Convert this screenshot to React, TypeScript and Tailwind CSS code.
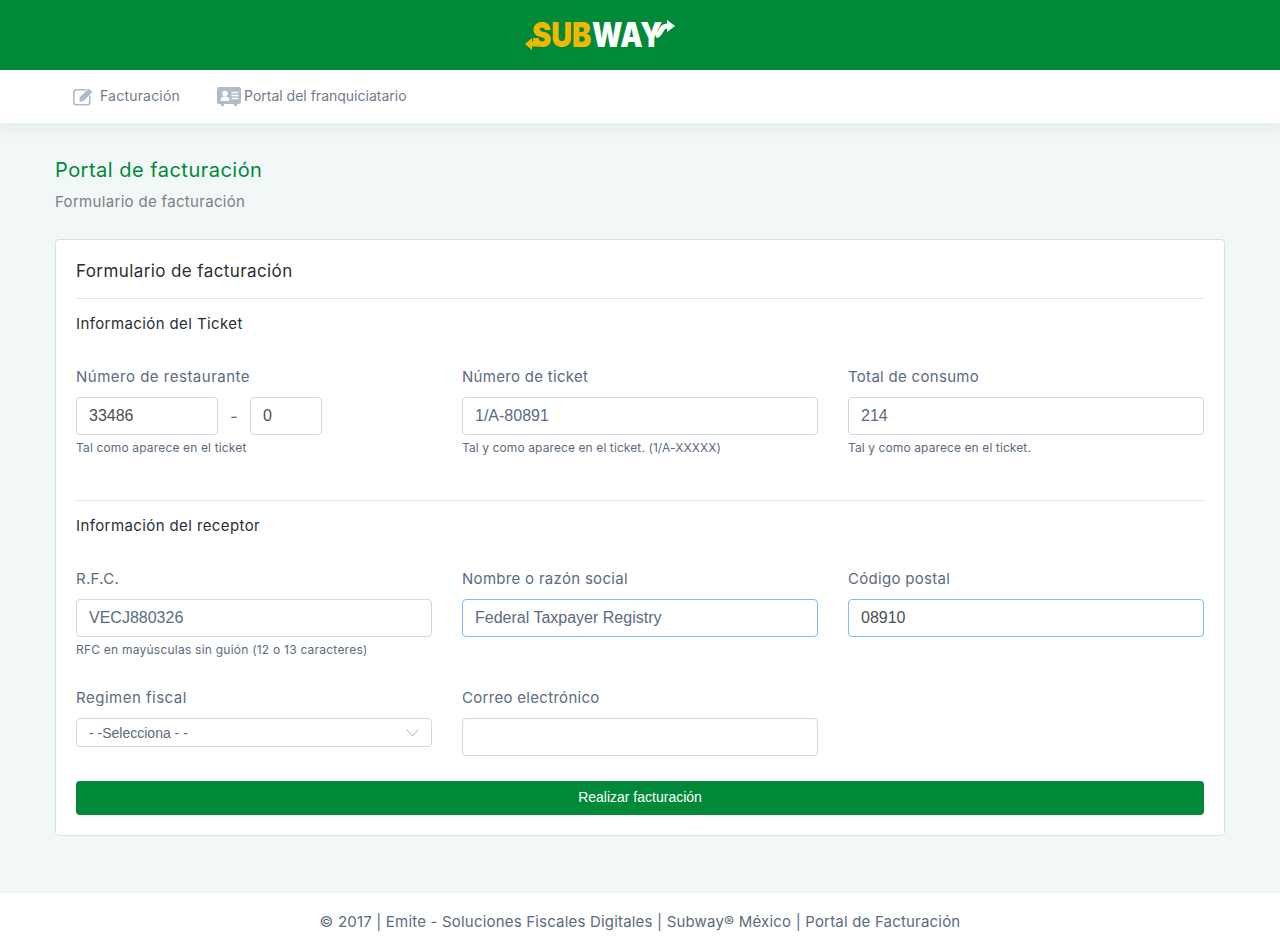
import React from "react";

const Box = ({ value, focus, dark, className = "" }: { value?: string; focus?: boolean; dark?: boolean; className?: string }) => (
  <div
    className={`flex h-[38px] items-center rounded-[4px] border bg-white px-3 font-['Liberation_Sans',sans-serif] text-[16px] ${focus ? "border-[#80bdff]" : "border-[#d5d8dc]"} ${dark ? "text-[#495057]" : "text-[#5b6b80]"} ${className}`}
  >
    {value}
  </div>
);

const Field = ({ label, value, help, focus, dark, helpClass = "tracking-[0.1px]" }: { label: string; value?: string; help?: string; focus?: boolean; dark?: boolean; helpClass?: string }) => (
  <div>
    <label className="block h-[22px] text-[15px] leading-[22px] tracking-[0.3px] text-[#5b6b80]">{label}</label>
    <div className="mt-[9px]">
      <Box value={value} focus={focus} dark={dark} />
    </div>
    {help && <p className={`mt-[4px] h-[18px] text-[12px] leading-[18px] text-[#5b6b80] ${helpClass}`}>{help}</p>}
  </div>
);

const Logo = () => (
  <div className="relative h-[30px] w-[150px]">
    <svg className="absolute left-0 top-[18px]" width="14" height="12" viewBox="0 0 14 12">
      <path d="M7 0 L0 6 L7 12 V8.5 H14 V3.5 H7 Z" fill="#f2b700" />
    </svg>
    <span className="absolute left-[7px] top-[-3px] origin-left scale-x-[0.85] font-['Inter',sans-serif] text-[34px] font-black leading-[36px] text-[#f2b700]">SUB</span>
    <span className="absolute left-[67px] top-[-3px] origin-left scale-x-[0.83] font-['Inter',sans-serif] text-[34px] font-black leading-[36px] text-white">WAY</span>
    <svg className="absolute left-[125px] top-0" width="25" height="20" viewBox="0 0 25 20">
      <path d="M6 16 C12 14 10 6 17 6" fill="none" stroke="#fff" strokeWidth="5" />
      <path d="M17 0 L25 6 L17 12 Z" fill="#fff" />
    </svg>
  </div>
);

export default function App() {
  return (
    <div className="flex min-h-[951px] flex-col bg-[#f2f7f7] font-['Inter',sans-serif]">
      <header className="flex h-[70px] items-center justify-center bg-[#008938] pr-[80px]">
        <Logo />
      </header>
      <nav className="flex h-[53px] items-center bg-white pb-[1px] pl-[73px] text-[14px] text-[#6f7c8c] shadow-[0_6px_20px_rgba(0,60,60,0.06)]">
        <div className="flex items-center gap-[6px] tracking-[0.2px]">
          <svg width="21" height="19" viewBox="0 0 21 19" fill="none">
            <rect x="0.8" y="2.8" width="16" height="15" rx="2.5" stroke="#afbcc7" strokeWidth="1.6" />
            <path d="M6 10.5 L15.5 1 L20 5 L10.5 14.5 L6 15.5 Z" fill="#afbcc7" stroke="#fff" strokeWidth="1" />
          </svg>
          <span className="mb-[2px]">Facturación</span>
        </div>
        <div className="ml-[37px] flex items-center gap-[3px]">
          <svg width="24" height="19" viewBox="0 0 24 19">
            <path d="M2 0 H22 A2 2 0 0 1 24 2 V15 A2 2 0 0 1 22 17 H20 V19 H17 V17 H7 V19 H4 V17 H2 A2 2 0 0 1 0 15 V2 A2 2 0 0 1 2 0 Z" fill="#afbcc7" />
            <circle cx="8" cy="6.5" r="2.8" fill="#fff" />
            <path d="M3.5 14 C3.5 10.5 5 9.5 8 9.5 C11 9.5 12.5 10.5 12.5 14 Z" fill="#fff" />
            <path d="M14.5 5.5 H21.5 M14.5 8.5 H21.5 M14.5 11.5 H21.5" stroke="#fff" strokeWidth="1.5" />
          </svg>
          <span className="mb-[2px]">Portal del franquiciatario</span>
        </div>
      </nav>

      <main className="flex-1 px-[55px] pt-[31px]">
        <h1 className="h-[32px] text-[20px] leading-[32px] tracking-[0.48px] text-[#008938]">Portal de facturación</h1>
        <p className="mt-[5px] h-[22px] text-[15px] leading-[22px] tracking-[0.32px] text-[#7a8088]">Formulario de facturación</p>

        <section className="mt-[26px] h-[597px] rounded-[4px] border border-[#dde1e4] bg-white px-[20px]">
          <h2 className="flex h-[59px] items-center border-b border-[#e4e6e8] pt-[6px] text-[17px] tracking-[0.4px] text-[#2b2f33]">Formulario de facturación</h2>
          <h3 className="mt-[14px] h-[22px] text-[15px] leading-[22px] tracking-[0.4px] text-[#2b2f33]">Información del Ticket</h3>

          <div className="mt-[31px] grid grid-cols-3 gap-x-[30px]">
            <div>
              <label className="block h-[22px] text-[15px] leading-[22px] tracking-[0.5px] text-[#5b6b80]">Número de restaurante</label>
              <div className="mt-[9px] flex items-center">
                <Box value="33486" dark className="w-[142px]" />
                <span className="w-[32px] text-center text-[16px] text-[#5b6b80]">-</span>
                <Box value="0" dark className="w-[72px]" />
              </div>
              <p className="mt-[4px] h-[18px] text-[12px] leading-[18px] tracking-[0.15px] text-[#5b6b80]">Tal como aparece en el ticket</p>
            </div>
            <Field label="Número de ticket" value="1/A-80891" help="Tal y como aparece en el ticket. (1/A-XXXXX)" />
            <Field label="Total de consumo" value="214" help="Tal y como aparece en el ticket." />
          </div>

          <div className="mt-[43px] border-t border-[#e4e6e8]" />
          <h3 className="mt-[14px] h-[22px] text-[15px] leading-[22px] tracking-[0.4px] text-[#2b2f33]">Información del receptor</h3>

          <div className="mt-[31px] grid grid-cols-3 gap-x-[30px]">
            <Field label="R.F.C." value="VECJ880326" help="RFC en mayúsculas sin guión (12 o 13 caracteres)" helpClass="tracking-[0.23px]" />
            <Field label="Nombre o razón social" value="Federal Taxpayer Registry" focus />
            <Field label="Código postal" value="08910" focus dark />
          </div>

          <div className="mt-[28px] grid grid-cols-3 gap-x-[30px]">
            <div>
              <label className="block h-[22px] text-[15px] leading-[22px] tracking-[0.5px] text-[#5b6b80]">Regimen fiscal</label>
              <div className="mt-[9px] flex h-[29px] items-center justify-between rounded-[4px] border border-[#d5d8dc] bg-white pl-3 pr-[12px] pt-[1px] font-['Liberation_Sans',sans-serif] text-[14px] text-[#5b6b80]">
                <span>- -Selecciona - -</span>
                <svg width="13" height="8" viewBox="0 0 13 8" fill="none">
                  <path d="M0.5 0.5 L6.5 7 L12.5 0.5" stroke="#a9b0bd" strokeWidth="1" />
                </svg>
              </div>
            </div>
            <Field label="Correo electrónico" />
          </div>

          <button className="mt-[25px] flex h-[34px] w-full items-center justify-center rounded-[4px] bg-[#008938] pb-[1px] font-['Liberation_Sans',sans-serif] text-[14px] text-white">
            Realizar facturación
          </button>
        </section>
      </main>

      <footer className="flex h-[59px] items-center justify-center border-t border-[#eef0f1] bg-white text-[15px] tracking-[0.19px] text-[#5b6b80]">
        © 2017 | Emite - Soluciones Fiscales Digitales | Subway® México | Portal de Facturación
      </footer>
    </div>
  );
}
